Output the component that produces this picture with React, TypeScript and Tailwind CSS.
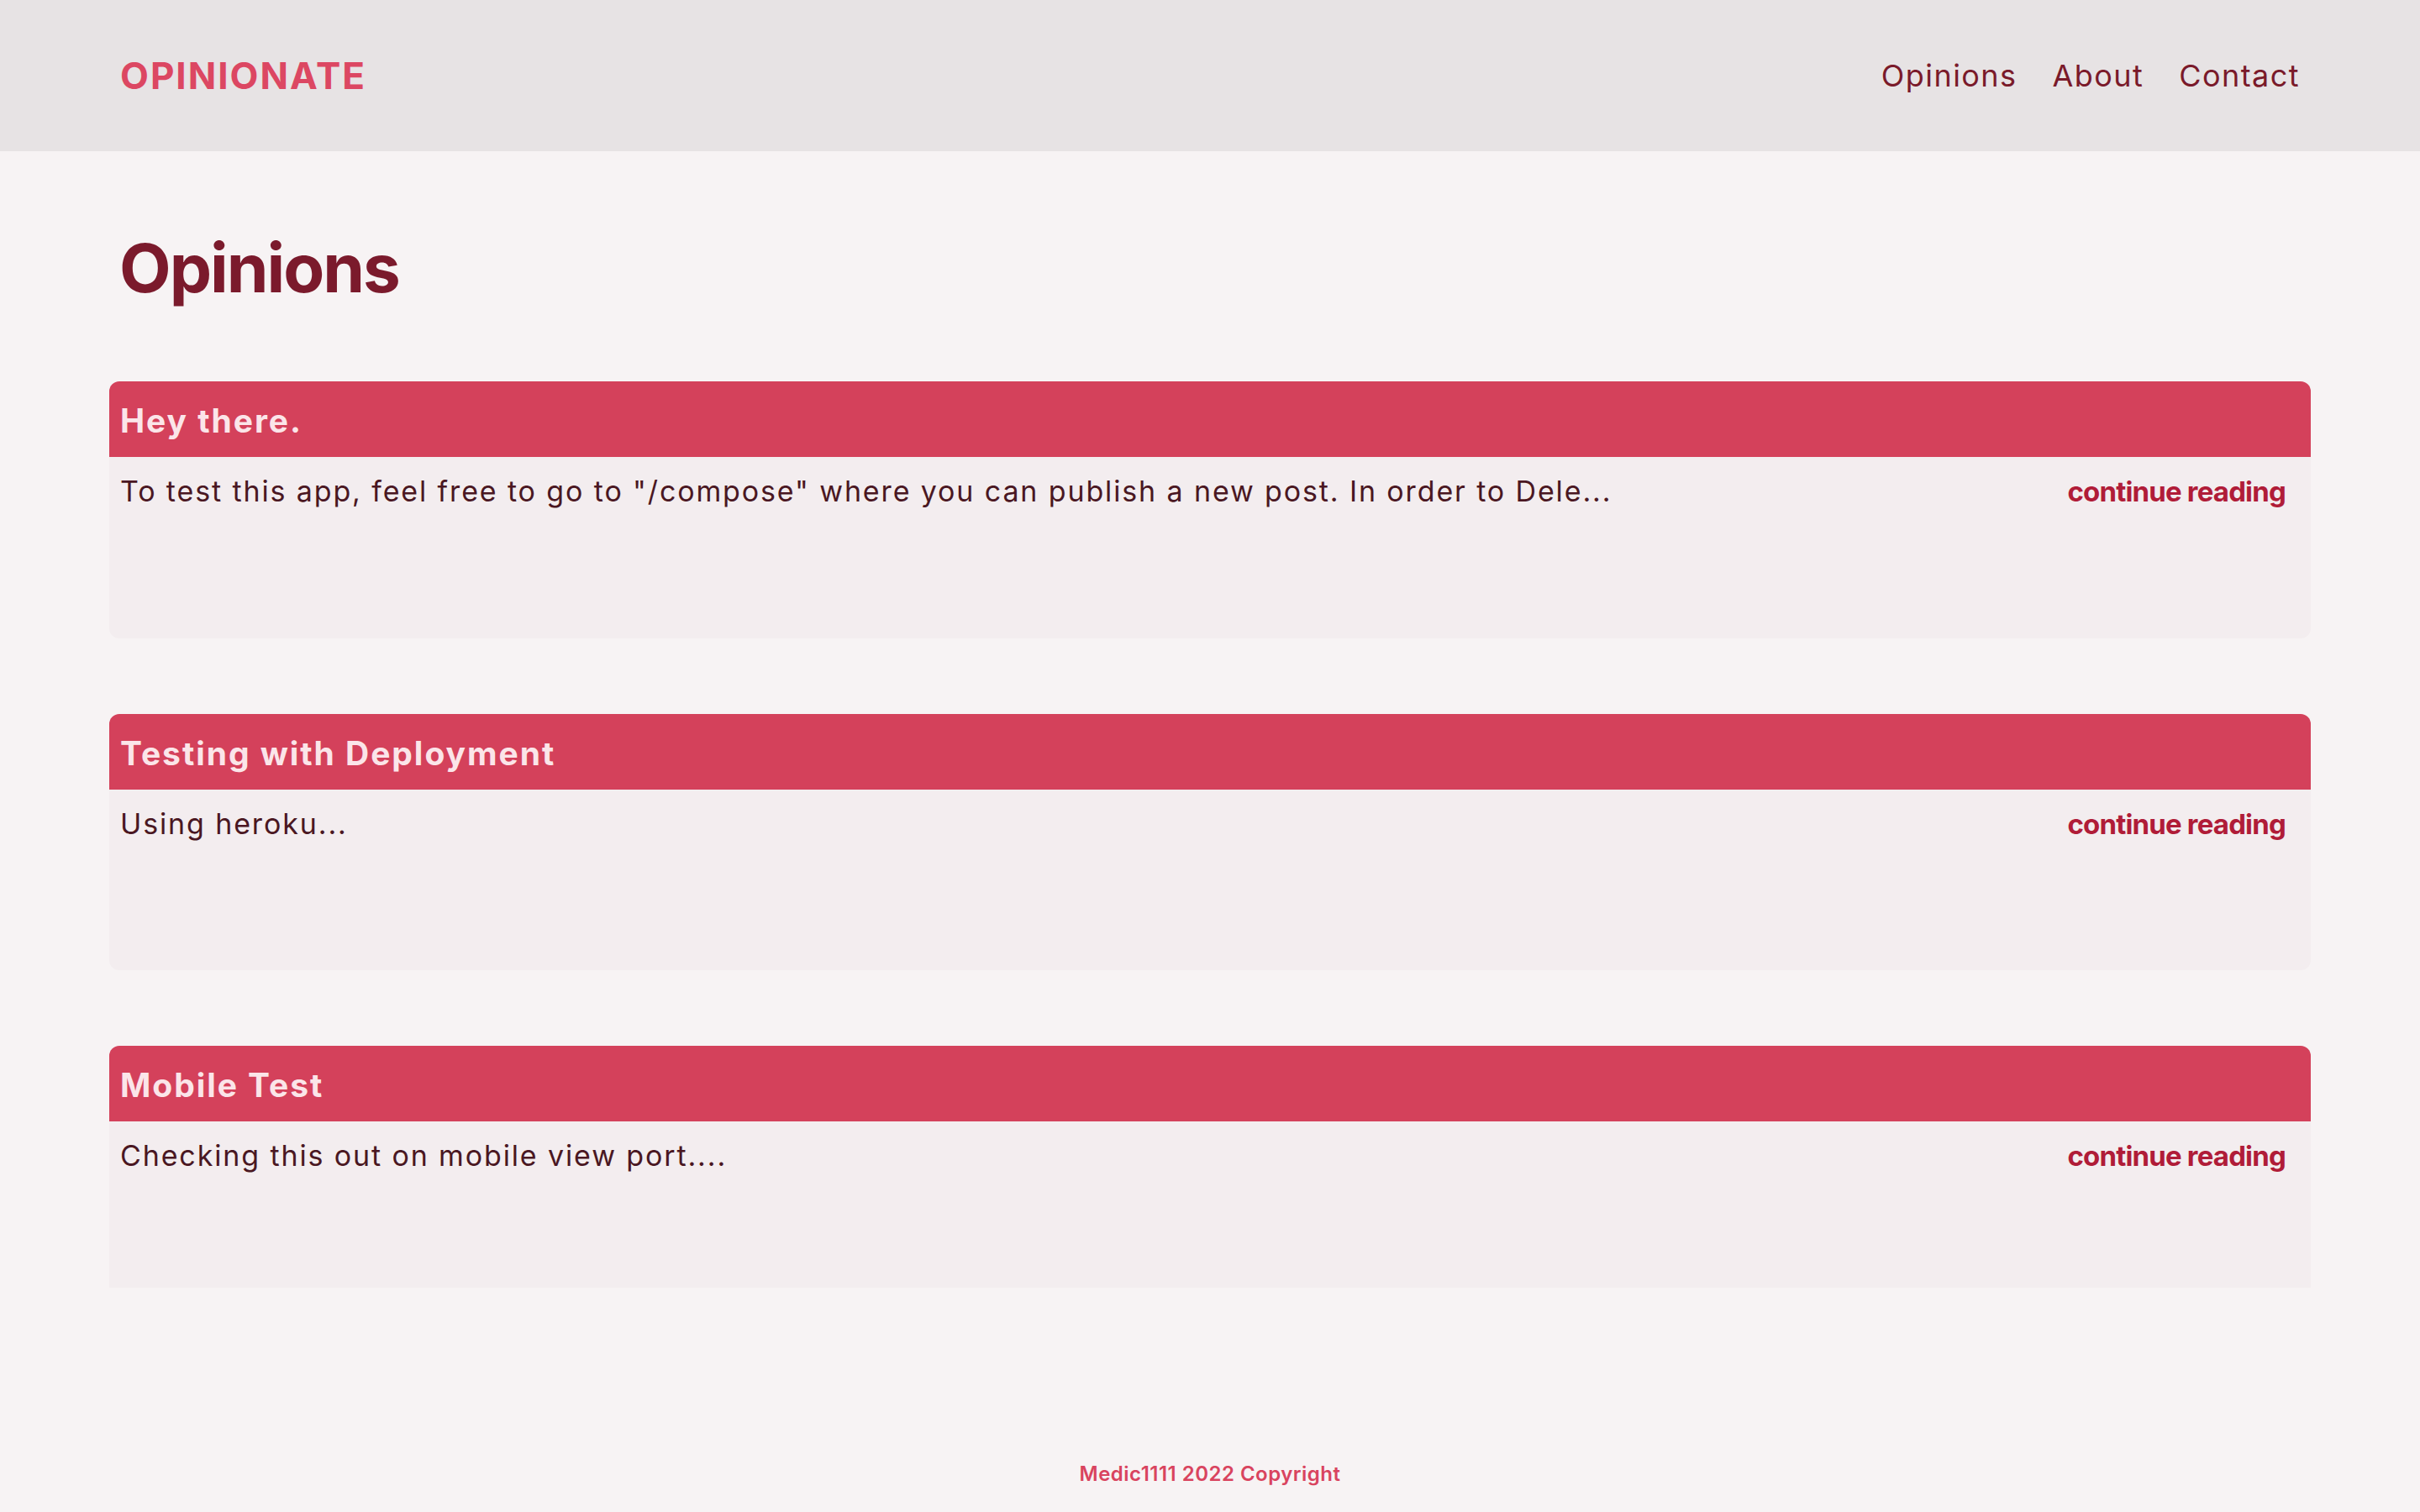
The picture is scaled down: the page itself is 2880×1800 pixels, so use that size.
import React from "react"

type Post = { title: string; excerpt: string; bodyH: string; rounded: string }

const POSTS: Post[] = [
  {
    title: "Hey there.",
    excerpt: 'To test this app, feel free to go to "/compose" where you can publish a new post. In order to Dele...',
    bodyH: "h-[216px]",
    rounded: "rounded-[12px]",
  },
  { title: "Testing with Deployment", excerpt: "Using heroku...", bodyH: "h-[215px]", rounded: "rounded-[12px]" },
  { title: "Mobile Test", excerpt: "Checking this out on mobile view port....", bodyH: "h-[198px]", rounded: "rounded-t-[12px]" },
]

function PostCard({ post }: { post: Post }) {
  return (
    <div className={`overflow-hidden ${post.rounded}`}>
      <div className="flex h-[90px] items-center bg-[#d4415b] px-[13px] pt-[3px]">
        <h2 className="text-[39px] font-bold leading-none tracking-[0.05em] text-[#fbe5e9]">{post.title}</h2>
      </div>
      <div className={`flex items-baseline justify-between bg-[#f3edef] pl-[13px] pr-[30px] pt-[24px] ${post.bodyH}`}>
        <p className="text-[34px] leading-none tracking-[0.055em] text-[#4a1722]">{post.excerpt}</p>
        <a href="#" className="text-[33px] font-bold leading-none tracking-[-0.025em] text-[#b01c38]">
          continue reading
        </a>
      </div>
    </div>
  )
}

export default function App() {
  return (
    <div
      className="flex min-h-screen flex-col bg-[#f7f3f4]"
      style={{ fontFamily: "Inter, 'Noto Sans', sans-serif" }}
    >
      {/* Top bar */}
      <header className="flex h-[180px] items-center justify-between bg-[#e7e3e4] pl-[143px] pr-[143px]">
        <a href="#" className="text-[44px] font-bold leading-none tracking-[0.045em] text-[#dc4762]">
          OPINIONATE
        </a>
        <nav className="flex items-center gap-[42px] text-[36px] leading-none tracking-[0.04em] text-[#7a1a2a]">
          <a href="#">Opinions</a>
          <a href="#">About</a>
          <a href="#">Contact</a>
        </nav>
      </header>

      <main className="px-[130px] pt-[99px]">
        <h1 className="pl-[12px] text-[80px] font-bold leading-none tracking-[-0.025em] text-[#7b1a2c]">Opinions</h1>
        <div className="mt-[95px] flex flex-col gap-[90px]">
          {POSTS.map((p) => (
            <PostCard key={p.title} post={p} />
          ))}
        </div>
      </main>

      <footer className="mt-auto pb-[27px] text-center">
        <p className="text-[24px] font-semibold leading-[36px] tracking-[0.02em] text-[#d9445f]">
          Medic1111 2022 Copyright
        </p>
      </footer>
    </div>
  )
}
